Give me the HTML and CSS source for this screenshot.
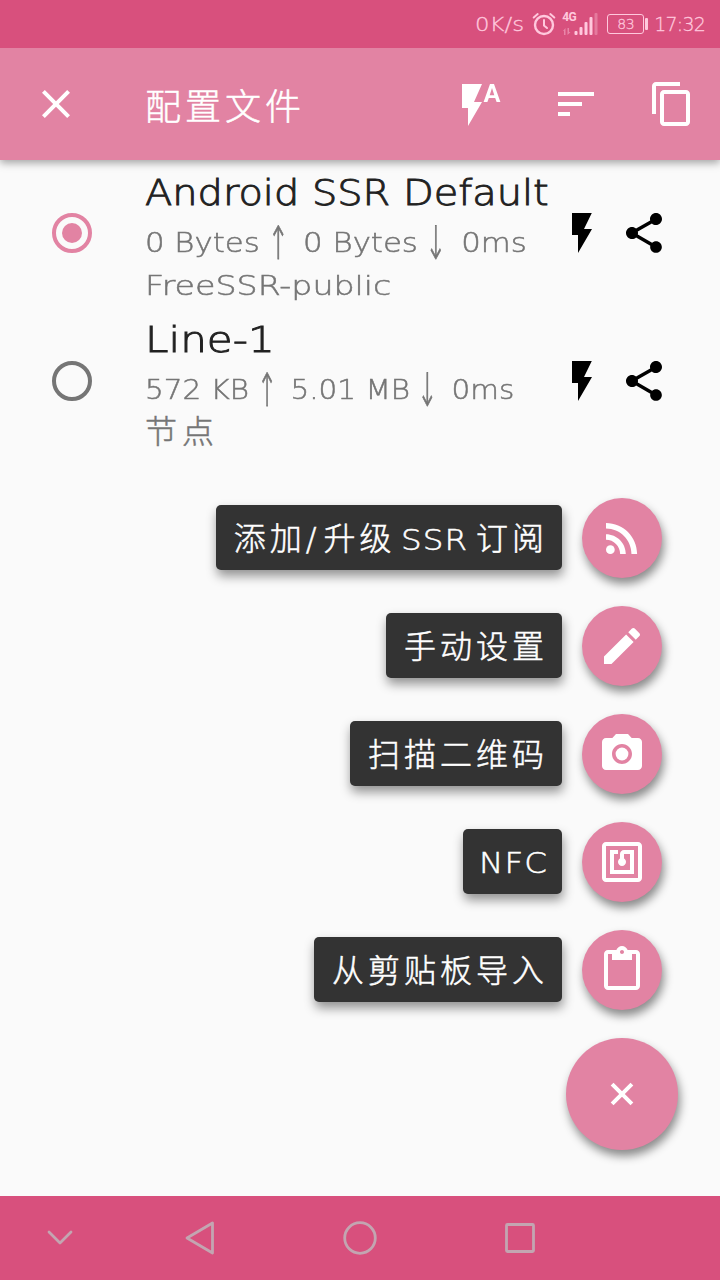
FILE: index.html
```html
<!DOCTYPE html>
<html lang="zh-CN">
<head>
  <meta charset="UTF-8">
  <title>配置文件</title>
  <link rel="stylesheet" href="styles.css">
</head>
<body>

  <!-- Status bar -->
  <div class="status-bar">
    <span class="speed">0K/s</span>
    <svg class="alarm" width="24" height="24" viewBox="0 0 24 24" fill="none" stroke="currentColor" stroke-width="2.4" stroke-linecap="round">
      <circle cx="12" cy="13" r="9"/>
      <path d="M12 8v5.500l3 2.500M1.700 5.500l4-3.400M22.300 5.500l-4-3.400" stroke-width="2"/>
    </svg>
    <div class="signal">
      <span class="network">4G</span>
      <svg width="36" height="24" viewBox="0 0 36 24" fill="currentColor">
        <path d="M1 19l2.500-3v7H2v-4zM5.500 16H7v4h1.500L5.500 23z" opacity=".45"/>
        <rect x="12.500" y="19" width="3" height="4" rx="1"/>
        <rect x="17.500" y="15" width="3" height="8" rx="1"/>
        <rect x="22.500" y="10" width="3" height="13" rx="1"/>
        <rect x="27.500" y="5" width="3" height="18" rx="1"/>
        <rect x="32.500" y="1" width="3" height="22" rx="1" opacity=".35"/>
      </svg>
    </div>
    <div class="battery">83</div>
    <span class="clock">17:32</span>
  </div>

  <!-- Toolbar -->
  <div class="toolbar">
    <svg class="icon" viewBox="0 0 24 24"><path d="M19 6.410L17.590 5 12 10.590 6.410 5 5 6.410 10.590 12 5 17.590 6.410 19 12 13.410 17.590 19 19 17.590 13.410 12z"/></svg>
    <h1>配置文件</h1>
    <svg class="icon" viewBox="0 0 24 24"><path d="M3 2v12h3v9l7-12H9l4-9H3zm16 0h-2l-3.200 9h1.900l.7-2h3.200l.7 2h1.900L19 2zm-2.150 5.650L18 4l1.150 3.650h-2.300z"/></svg>
    <svg class="icon" viewBox="0 0 24 24"><path d="M3 18h6v-2H3v2zM3 6v2h18V6H3zm0 7h12v-2H3v2z"/></svg>
    <svg class="icon" viewBox="0 0 24 24"><path d="M16 1H4c-1.100 0-2 .9-2 2v14h2V3h12V1zm3 4H8c-1.100 0-2 .9-2 2v14c0 1.100.9 2 2 2h11c1.100 0 2-.9 2-2V7c0-1.100-.9-2-2-2zm0 16H8V7h11v14z"/></svg>
  </div>

  <!-- Profiles -->
  <div class="profiles">
    <div class="profile">
      <div class="radio checked"></div>
      <div class="info">
        <h2>Android SSR Default</h2>
        <p class="traffic"><span>0 Bytes</span><span class="arrow">↑</span><span>0 Bytes</span><span class="arrow">↓</span><span>0ms</span></p>
        <p class="group">FreeSSR-public</p>
      </div>
      <svg class="icon" viewBox="0 0 24 24"><path d="M7 2v11h3v9l7-12h-4l3.900-8z"/></svg>
      <svg class="icon" viewBox="0 0 24 24"><path d="M18 16.080c-.76 0-1.440.3-1.960.77L8.910 12.700c.05-.23.09-.46.09-.7s-.04-.47-.09-.7l7.050-4.110c.54.5 1.250.81 2.040.81 1.660 0 3-1.340 3-3s-1.340-3-3-3-3 1.340-3 3c0 .24.04.47.09.7L8.040 9.810C7.500 9.310 6.790 9 6 9c-1.660 0-3 1.340-3 3s1.340 3 3 3c.79 0 1.500-.31 2.040-.81l7.120 4.160c-.05.21-.08.43-.08.65 0 1.610 1.310 2.920 2.920 2.920s2.920-1.310 2.920-2.920-1.310-2.920-2.920-2.920z"/></svg>
    </div>
    <div class="profile second">
      <div class="radio"></div>
      <div class="info">
        <h2>Line-1</h2>
        <p class="traffic"><span>572 KB</span><span class="arrow">↑</span><span>5.01 MB</span><span class="arrow">↓</span><span>0ms</span></p>
        <p class="group cjk">节点</p>
      </div>
      <svg class="icon" viewBox="0 0 24 24"><path d="M7 2v11h3v9l7-12h-4l3.900-8z"/></svg>
      <svg class="icon" viewBox="0 0 24 24"><path d="M18 16.080c-.76 0-1.440.3-1.960.77L8.910 12.700c.05-.23.09-.46.09-.7s-.04-.47-.09-.7l7.050-4.110c.54.5 1.250.81 2.040.81 1.660 0 3-1.340 3-3s-1.340-3-3-3-3 1.340-3 3c0 .24.04.47.09.7L8.040 9.810C7.500 9.310 6.790 9 6 9c-1.660 0-3 1.340-3 3s1.340 3 3 3c.79 0 1.500-.31 2.040-.81l7.120 4.160c-.05.21-.08.43-.08.65 0 1.610 1.310 2.920 2.920 2.920s2.920-1.310 2.920-2.920-1.310-2.920-2.920-2.920z"/></svg>
    </div>
  </div>

  <!-- Floating action menu -->
  <div class="fab-menu">
    <div class="fab-item">
      <span class="label">添加<span class="slash">/</span>升级<span class="latin">SSR</span>订阅</span>
      <div class="fab"><svg class="icon" viewBox="0 0 24 24"><circle cx="6.180" cy="17.820" r="2.180"/><path d="M4 4.440v2.830c7.030 0 12.730 5.700 12.730 12.730h2.830c0-8.590-6.970-15.560-15.560-15.560zm0 5.660v2.830c3.900 0 7.070 3.170 7.070 7.070h2.830c0-5.470-4.430-9.900-9.900-9.900z"/></svg></div>
    </div>
    <div class="fab-item">
      <span class="label">手动设置</span>
      <div class="fab"><svg class="icon" viewBox="0 0 24 24"><path d="M3 17.250V21h3.750L17.810 9.940l-3.750-3.750L3 17.250zM20.710 7.040c.39-.39.39-1.020 0-1.410l-2.340-2.340c-.39-.39-1.020-.39-1.410 0l-1.830 1.830 3.750 3.750 1.830-1.830z"/></svg></div>
    </div>
    <div class="fab-item">
      <span class="label">扫描二维码</span>
      <div class="fab"><svg class="icon" viewBox="0 0 24 24"><circle cx="12" cy="12" r="3.200"/><path d="M9 2L7.170 4H4c-1.100 0-2 .9-2 2v12c0 1.100.9 2 2 2h16c1.100 0 2-.9 2-2V6c0-1.100-.9-2-2-2h-3.170L15 2H9zm3 15c-2.760 0-5-2.240-5-5s2.240-5 5-5 5 2.240 5 5-2.240 5-5 5z"/></svg></div>
    </div>
    <div class="fab-item">
      <span class="label nfc"><span class="latin">NFC</span></span>
      <div class="fab"><svg class="icon" viewBox="0 0 24 24"><path d="M20 2H4c-1.100 0-2 .9-2 2v16c0 1.100.9 2 2 2h16c1.100 0 2-.9 2-2V4c0-1.100-.9-2-2-2zm0 18H4V4h16v16zM18 6h-5c-1.100 0-2 .9-2 2v2.280c-.6.350-1 .98-1 1.720 0 1.100.9 2 2 2s2-.9 2-2c0-.74-.4-1.380-1-1.720V8h3v8H8V8h2V6H6v12h12V6z"/></svg></div>
    </div>
    <div class="fab-item">
      <span class="label">从剪贴板导入</span>
      <div class="fab"><svg class="icon" viewBox="0 0 24 24"><path d="M19 2h-4.180C14.400.84 13.300 0 12 0c-1.300 0-2.400.84-2.820 2H5c-1.100 0-2 .9-2 2v16c0 1.100.9 2 2 2h14c1.100 0 2-.9 2-2V4c0-1.100-.9-2-2-2zm-7 0c.55 0 1 .45 1 1s-.45 1-1 1-1-.45-1-1 .45-1 1-1zm7 18H5V4h2v3h10V4h2v16z"/></svg></div>
    </div>
    <div class="fab main">
      <svg width="24" height="24" viewBox="0 0 24 24" fill="none" stroke="#fff" stroke-width="4"><path d="M2.100 2.100l19.800 19.800M21.900 2.100L2.100 21.900"/></svg>
    </div>
  </div>

  <!-- Navigation bar -->
  <div class="nav-bar">
    <svg class="hide" width="40" height="40" viewBox="0 0 40 40"><path d="M9 14l11 11 11-11"/></svg>
    <svg width="40" height="40" viewBox="0 0 40 40"><path d="M32.500 5v30L7 20z"/></svg>
    <svg width="40" height="40" viewBox="0 0 40 40"><circle cx="20" cy="20" r="15.300"/></svg>
    <svg width="40" height="40" viewBox="0 0 40 40"><rect x="6.500" y="6.500" width="27" height="27" rx="1"/></svg>
  </div>

</body>
</html>
```
FILE: styles.css
```css
* {
  box-sizing: border-box;
}

body {
  margin: 0;
  height: 1280px;
  display: flex;
  flex-direction: column;
  position: relative;
  overflow: hidden;
  background: #fafafa;
  font-family: 'DejaVu Sans', 'Noto Sans CJK SC', sans-serif;
  font-weight: 200;
  -webkit-text-stroke: 0.5px currentColor;
}

h1, h2, p {
  margin: 0;
  font-weight: 200;
  white-space: nowrap;
}

.icon {
  width: 48px;
  height: 48px;
  flex: none;
  fill: currentColor;
}

/* status bar */
.status-bar {
  position: relative;
  z-index: 1;
  height: 48px;
  flex: none;
  display: flex;
  align-items: center;
  justify-content: flex-end;
  padding-right: 15px;
  background: #d8507d;
  color: #ffc8dd;
  font-size: 19px;
  -webkit-text-stroke-width: 0.3px;
}

.speed {
  margin-right: 16px;
  transform: scaleX(1.2);
  transform-origin: left center;
}

.alarm {
  margin-right: 6px;
}

.signal {
  position: relative;
  width: 36px;
  height: 24px;
  margin-right: 9px;
}

.network {
  position: absolute;
  top: 0;
  left: 0;
  font: bold 12px/11px 'Roboto', sans-serif;
  letter-spacing: -0.5px;
  -webkit-text-stroke-width: 0;
}

.battery {
  position: relative;
  width: 37px;
  height: 20px;
  margin-right: 10px;
  border: 1.5px solid #ffc8dd;
  border-radius: 3px;
  font-size: 14px;
  line-height: 18px;
  letter-spacing: -0.5px;
  text-align: center;
}

.battery::after {
  content: '';
  position: absolute;
  top: 3px;
  right: -5px;
  width: 3px;
  height: 12px;
  border-radius: 1px;
  background: #ffc8dd;
}

.clock {
  letter-spacing: -0.8px;
}

/* toolbar */
.toolbar {
  height: 112px;
  flex: none;
  display: flex;
  align-items: center;
  gap: 48px;
  padding: 0 24px 0 32px;
  background: #e283a3;
  color: #fff;
  box-shadow: 0 3px 8px rgba(0, 0, 0, 0.35);
}

.toolbar h1 {
  flex: 1;
  margin-left: 17px;
  font-size: 36px;
  letter-spacing: 4px;
}

/* profile list */
.profiles {
  flex: 1;
}

.profile {
  height: 146px;
  display: flex;
  align-items: center;
  padding: 0 52px;
}

.profile.second {
  height: 149px;
}

.profile .icon:last-child {
  margin-left: 14px;
}

.radio {
  width: 40px;
  height: 40px;
  flex: none;
  display: flex;
  align-items: center;
  justify-content: center;
  border: 4px solid #757575;
  border-radius: 50%;
}

.radio.checked {
  border-color: #e283a3;
}

.radio.checked::before {
  content: '';
  width: 20px;
  height: 20px;
  border-radius: 50%;
  background: #e283a3;
}

.info {
  flex: 1;
  align-self: flex-start;
  width: 0;
  padding-top: 8px;
  margin-left: 53px;
}

.second .info {
  padding-top: 9px;
}

.info h2,
.info p {
  transform-origin: left center;
}

.info h2 {
  color: #212121;
  font-size: 36px;
  line-height: 50px;
  transform: scaleX(1.108);
  -webkit-text-stroke-width: 0.9px;
}

.second h2 {
  transform: scaleX(1.17);
}

.info p {
  color: #757575;
  font-size: 27px;
  line-height: 43px;
}

.info .traffic {
  display: flex;
  margin-top: 3px;
  transform: scaleX(1.14);
}

.info .group {
  transform: scaleX(1.23);
}

.second .traffic {
  transform: scaleX(1.09);
}

.arrow {
  width: 32px;
  margin-right: 6px;
  text-align: center;
  transform: scale(0.8, 1.7);
}

.info .cjk {
  font-size: 32px;
  letter-spacing: 5px;
  transform: none;
}

/* floating menu */
.fab-menu {
  position: absolute;
  top: 498px;
  right: 58px;
  display: flex;
  flex-direction: column;
  align-items: flex-end;
  gap: 28px;
  color: #fff;
}

.fab-item {
  display: flex;
  align-items: center;
  gap: 20px;
}

.label {
  height: 65px;
  margin-bottom: 1px;
  padding: 0 14px 0 18px;
  border-radius: 5px;
  background: #333;
  box-shadow: 1px 6px 11px rgba(0, 0, 0, 0.42);
  font-size: 32px;
  line-height: 68px;
  letter-spacing: 4px;
  white-space: nowrap;
}

.slash {
  margin-right: 3px;
}

.latin {
  display: inline-block;
  margin: 0 15.5px 0 5px;
  font-size: 29px;
  letter-spacing: 1px;
  transform: scaleX(1.12);
  transform-origin: left center;
}

.label.nfc {
  padding: 0 21px 0 16px;
  line-height: 66px;
}

.nfc .latin {
  margin: 0;
}

.fab {
  width: 80px;
  height: 80px;
  display: flex;
  align-items: center;
  justify-content: center;
  border-radius: 50%;
  background: #e283a3;
  box-shadow: 2px 6px 10px rgba(0, 0, 0, 0.45);
}

.fab.main {
  width: 112px;
  height: 112px;
  margin-right: -16px;
}

/* navigation bar */
.nav-bar {
  height: 84px;
  flex: none;
  display: flex;
  align-items: center;
  gap: 120px;
  padding-left: 40px;
  background: #d8507d;
}

.nav-bar svg {
  fill: none;
  stroke: #c3a5b1;
  stroke-width: 2.8;
  stroke-linejoin: round;
  stroke-linecap: round;
}

.nav-bar .hide {
  margin-right: -20px;
}
```
